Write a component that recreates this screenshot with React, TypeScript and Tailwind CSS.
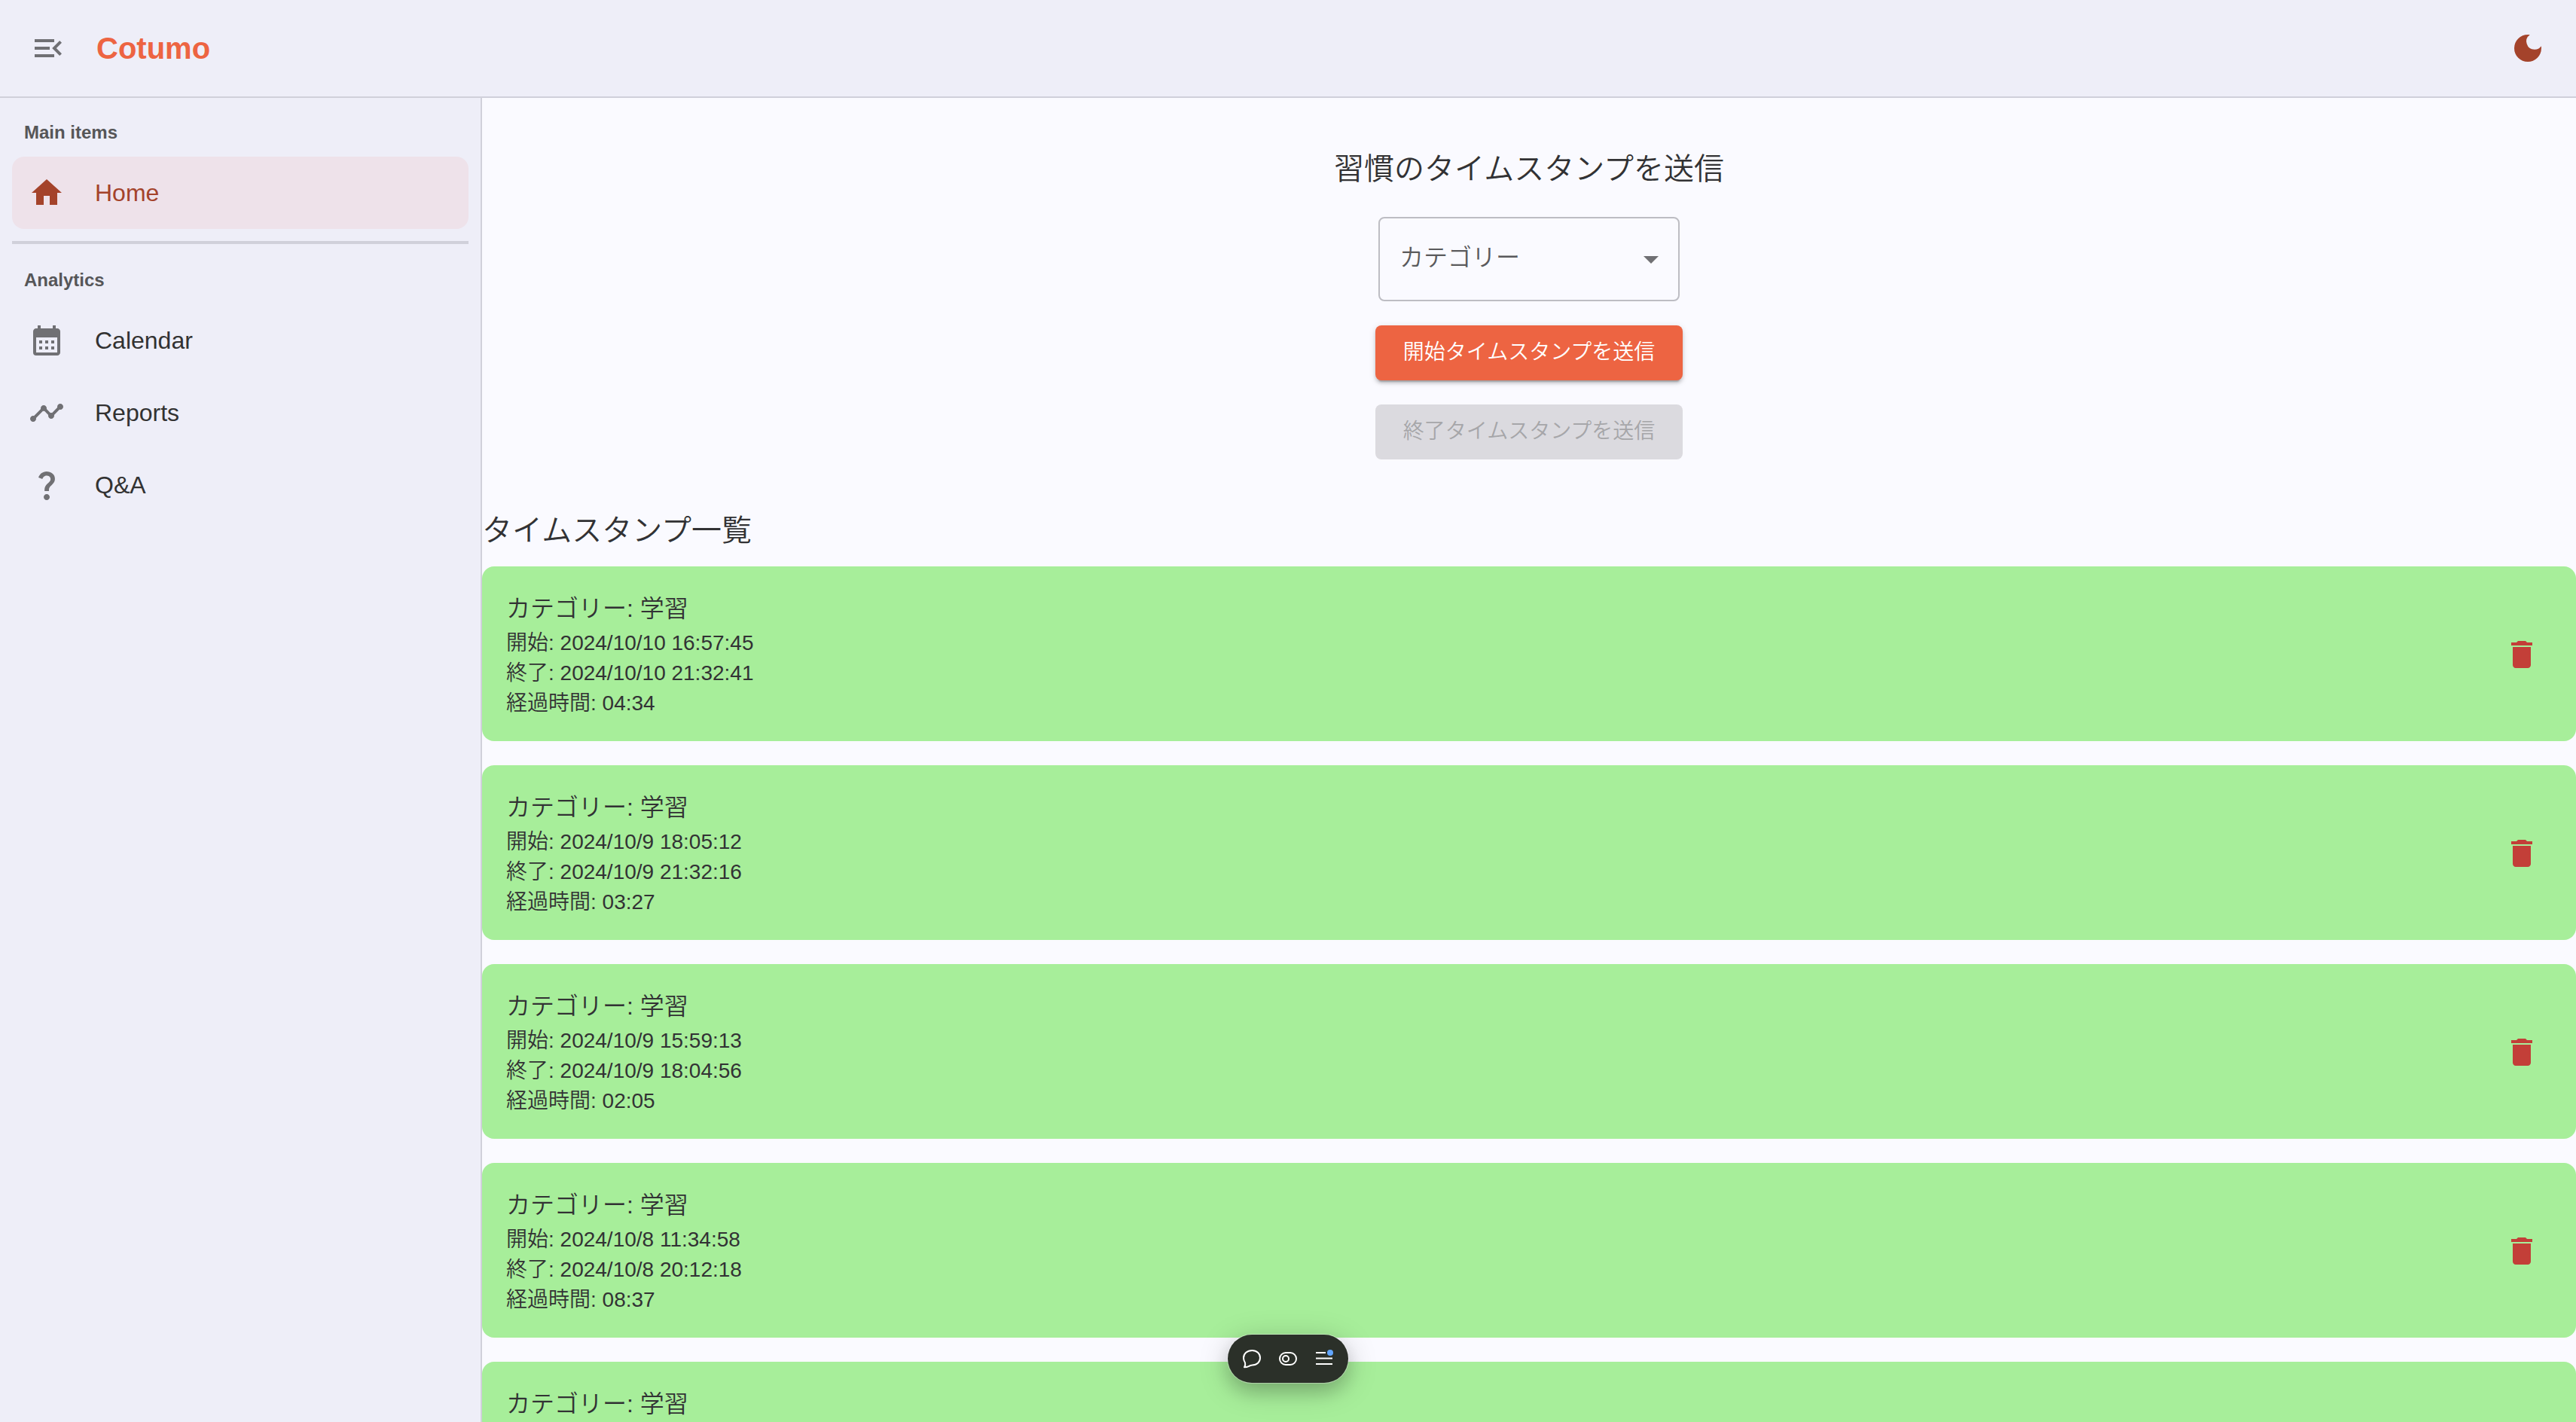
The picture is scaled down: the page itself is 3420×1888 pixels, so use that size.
import React from "react";
import type { IconType } from "react-icons";
import {
  MdArrowDropDown,
  MdCalendarMonth,
  MdDarkMode,
  MdDelete,
  MdHome,
  MdMenuOpen,
  MdQuestionMark,
  MdTimeline,
} from "react-icons/md";

type Stamp = { category: string; start: string; end: string; elapsed: string };

const stamps: Stamp[] = [
  { category: "学習", start: "2024/10/10 16:57:45", end: "2024/10/10 21:32:41", elapsed: "04:34" },
  { category: "学習", start: "2024/10/9 18:05:12", end: "2024/10/9 21:32:16", elapsed: "03:27" },
  { category: "学習", start: "2024/10/9 15:59:13", end: "2024/10/9 18:04:56", elapsed: "02:05" },
  { category: "学習", start: "2024/10/8 11:34:58", end: "2024/10/8 20:12:18", elapsed: "08:37" },
  { category: "学習", start: "2024/10/7 13:20:41", end: "2024/10/7 19:02:10", elapsed: "05:41" },
];

function NavItem({ icon: Icon, label, active = false }: { icon: IconType; label: string; active?: boolean }) {
  return (
    <li>
      <a
        href="#"
        aria-current={active ? "page" : undefined}
        className={
          active
            ? "flex h-24 items-center gap-10 rounded-2xl bg-[#eee2ea] px-[22px] text-[#a4432b]"
            : "flex h-24 items-center gap-10 rounded-2xl px-[22px] text-[#323232]"
        }
      >
        <Icon className={active ? "size-12 shrink-0" : "size-12 shrink-0 text-[#707074]"} />
        <span className="text-[32px] leading-[48px]">{label}</span>
      </a>
    </li>
  );
}

function Sidebar() {
  return (
    <nav className="flex w-[640px] shrink-0 flex-col border-r-2 border-[#d0d0da] bg-[#eeeef8] px-4 pt-[14px]">
      <h2 className="flex h-16 items-center px-4 text-2xl font-bold text-[#565658]">Main items</h2>
      <ul>
        <NavItem icon={MdHome} label="Home" active />
      </ul>
      <hr className="my-4 border-t-4 border-[#d0d0da]" />
      <h2 className="flex h-16 items-center px-4 text-2xl font-bold text-[#565658]">Analytics</h2>
      <ul>
        <NavItem icon={MdCalendarMonth} label="Calendar" />
        <NavItem icon={MdTimeline} label="Reports" />
        <NavItem icon={MdQuestionMark} label="Q&A" />
      </ul>
    </nav>
  );
}

function StampForm() {
  return (
    <form className="flex flex-col items-center gap-8" onSubmit={(e) => e.preventDefault()}>
      <h1 className="text-[40px] leading-[64px]">習慣のタイムスタンプを送信</h1>
      <div className="relative w-[400px]">
        <select
          aria-label="カテゴリー"
          className="h-28 w-full appearance-none rounded-lg border-2 border-[#bdbdc3] bg-transparent px-[26px] pb-1 text-[32px] text-[#5a5a5c]"
        >
          <option>カテゴリー</option>
          <option>学習</option>
        </select>
        <MdArrowDropDown className="pointer-events-none absolute top-8 right-[14px] size-12 text-[#707074]" />
      </div>
      <button
        type="submit"
        className="h-[73px] w-[408px] rounded-lg bg-[#ed6442] pb-0.5 text-[28px] text-white shadow-[0_6px_2px_-4px_rgba(0,0,0,0.2),0_4px_4px_0_rgba(0,0,0,0.14),0_2px_10px_0_rgba(0,0,0,0.12)]"
      >
        開始タイムスタンプを送信
      </button>
      <button type="button" disabled className="h-[73px] w-[408px] rounded-lg bg-[#dbdadf] pb-0.5 text-[28px] text-[#a6a6a9]">
        終了タイムスタンプを送信
      </button>
    </form>
  );
}

function StampCard({ stamp }: { stamp: Stamp }) {
  return (
    <li className="flex items-center justify-between rounded-2xl bg-[#a7ee9a] pt-8 pr-12 pb-[30px] pl-8">
      <div>
        <h3 className="mb-0.5 text-[32px] leading-[48px]">カテゴリー: {stamp.category}</h3>
        <p className="text-[28px] leading-10">開始: {stamp.start}</p>
        <p className="text-[28px] leading-10">終了: {stamp.end}</p>
        <p className="text-[28px] leading-10">経過時間: {stamp.elapsed}</p>
      </div>
      <button type="button" aria-label="削除" className="text-[#c33f38]">
        <MdDelete className="size-12" />
      </button>
    </li>
  );
}

function FloatingToolbar() {
  return (
    <div className="fixed bottom-[52px] left-1/2 flex h-16 w-40 -translate-x-1/2 items-center justify-center gap-4 rounded-full bg-[#2b3029] text-white shadow-[0_0_0_1px_rgba(255,255,255,0.35),0_8px_40px_rgba(0,0,0,0.22),0_12px_24px_rgba(0,0,0,0.14)]">
      <button type="button" aria-label="Comments">
        <svg viewBox="0 0 32 32" className="size-8" fill="none" stroke="currentColor" strokeWidth="2" strokeLinejoin="round">
          <path d="M16.400 5C22.600 5 27 9.300 27 14.700C27 20.300 22.600 24.400 16.600 24.400C14.800 24.400 13.300 25 11.600 26.100C9.800 27 7.900 27.400 6 27.300C7.300 25.400 7.600 23.300 7 21.200C5.500 19 5 17.300 5 15C5 9.300 9.800 5 16.400 5Z" />
        </svg>
      </button>
      <button type="button" aria-label="Visibility">
        <svg viewBox="0 0 32 32" className="size-8" fill="none" stroke="currentColor" strokeWidth="2">
          <rect x="5" y="8" width="22" height="16" rx="8" />
          <circle cx="13" cy="16" r="4" />
        </svg>
      </button>
      <button type="button" aria-label="Menu">
        <svg viewBox="0 0 32 32" className="size-8" fill="none" stroke="currentColor" strokeWidth="2">
          <path d="M5 8H18M5 15.500H27M5 23H27" />
          <circle cx="24" cy="8" r="4" fill="#62a6ff" stroke="none" />
        </svg>
      </button>
    </div>
  );
}

export default function App() {
  return (
    <div className="flex h-screen flex-col overflow-hidden bg-[#fafaff] font-['Liberation_Sans','Noto_Sans_CJK_JP',sans-serif] font-[350] text-[#323234]">
      <header className="flex items-center justify-between border-b-2 border-[#d0d0da] bg-[#eeeef8] p-10">
        <div className="flex items-center gap-10">
          <button type="button" aria-label="Collapse menu" className="text-[#707074]">
            <MdMenuOpen className="size-12" />
          </button>
          <a href="#" className="text-[40px] leading-[48px] font-bold text-[#ed6442]">
            Cotumo
          </a>
        </div>
        <button type="button" aria-label="Dark mode" className="text-[#a4432b]">
          <MdDarkMode className="size-12" />
        </button>
      </header>
      <div className="flex min-h-0 flex-1">
        <Sidebar />
        <main className="flex min-w-0 flex-1 flex-col gap-[62px] overflow-hidden pt-[62px]">
          <StampForm />
          <section>
            <h2 className="mb-4 text-[40px] leading-[64px]">タイムスタンプ一覧</h2>
            <ul className="flex flex-col gap-8">
              {stamps.map((stamp) => (
                <StampCard key={stamp.start} stamp={stamp} />
              ))}
            </ul>
          </section>
        </main>
      </div>
      <FloatingToolbar />
    </div>
  );
}
